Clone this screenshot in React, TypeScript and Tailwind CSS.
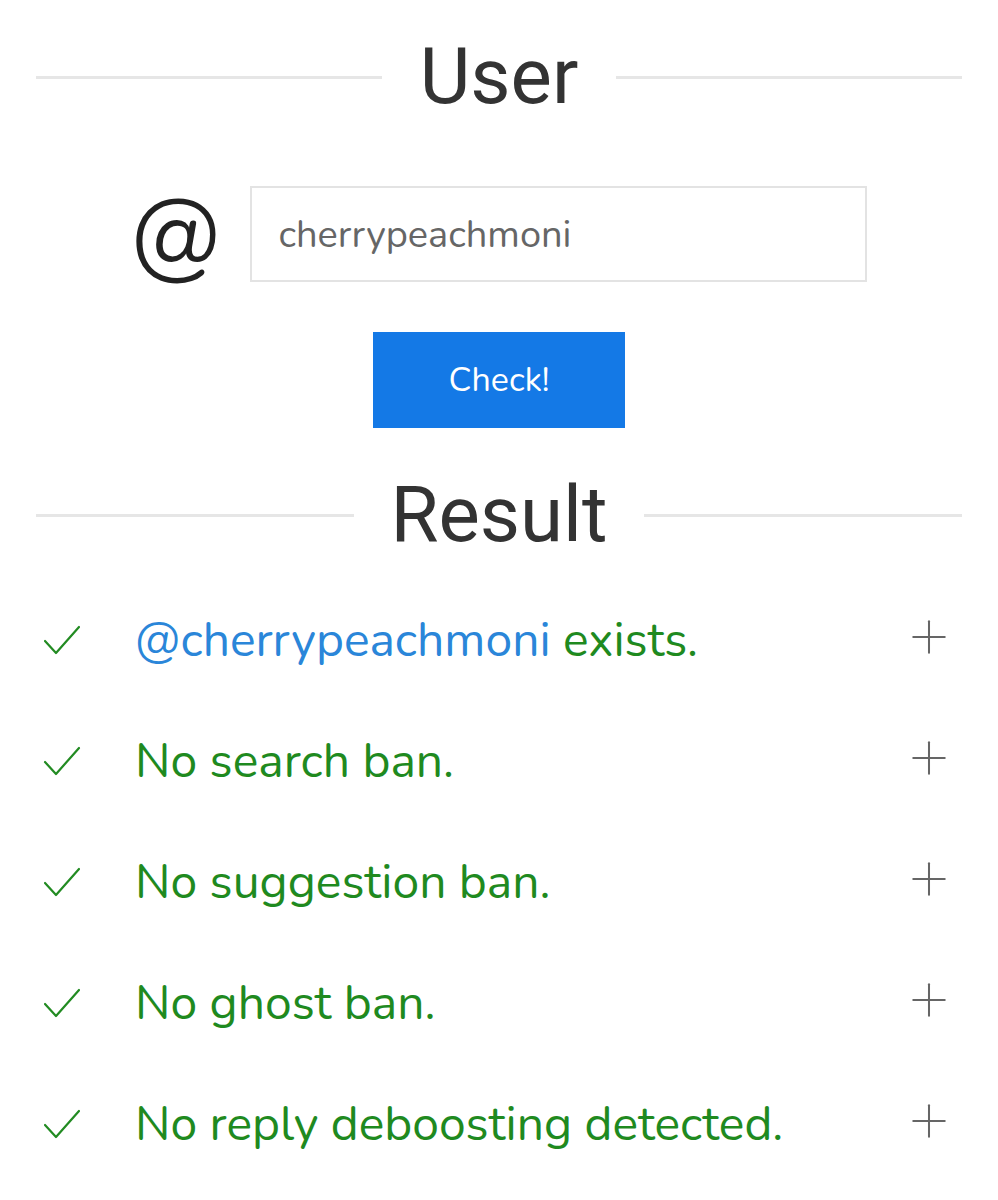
import { Plus } from 'lucide-react';

const rounded = { fontFamily: "Nunito, 'Open Sans', Lato, sans-serif" };
const heading = { fontFamily: "Roboto, 'Liberation Sans', sans-serif" };

const SectionTitle = ({ title, gap }: { title: string; gap: string }) => (
  <div className={`flex items-center ${gap}`}>
    <div className="h-[3px] flex-1 bg-[#e6e6e6]" />
    <h2 className="text-[78px] leading-none text-[#333]" style={heading}>
      {title}
    </h2>
    <div className="h-[3px] flex-1 bg-[#e6e6e6]" />
  </div>
);

const CheckMark = () => (
  <svg width="38" height="30" viewBox="0 0 38 30" fill="none" className="shrink-0">
    <polyline points="2,16 13,28 36,2" stroke="#228b22" strokeWidth="2.2" strokeLinecap="round" strokeLinejoin="round" />
  </svg>
);

const results = [
  { handle: '@cherrypeachmoni', text: ' exists.' },
  { text: 'No search ban.' },
  { text: 'No suggestion ban.' },
  { text: 'No ghost ban.' },
  { text: 'No reply deboosting detected.' },
];

export default function App() {
  return (
    <div className="min-h-[1200px] w-full bg-white px-[36px] pt-[38px]">
      <SectionTitle title="User" gap="gap-[38px]" />

      <div className="mt-[68px] flex items-center justify-center gap-[29px]">
        <span className="text-[96px] leading-none text-[#222] mt-[4px]" style={rounded}>
          @
        </span>
        <div className="flex h-[96px] w-[617px] items-center border-2 border-[#e3e3e3] px-[26px]">
          <span className="text-[38px] text-[#666]" style={rounded}>
            cherrypeachmoni
          </span>
        </div>
      </div>

      <div className="mt-[48px] flex justify-center">
        <button
          className="flex h-[96px] w-[252px] items-center justify-center bg-[#1479e6] text-[34px] text-white"
          style={rounded}
        >
          Check!
        </button>
      </div>

      <div className="mt-[48px]">
        <SectionTitle title="Result" gap="gap-[36px]" />
      </div>

      <ul className="mt-[25px] flex flex-col">
        {results.map((r, i) => (
          <li key={i} className="flex h-[121px] items-center pl-[7px] pr-[6px]" style={rounded}>
            <CheckMark />
            <span className="ml-[54px] flex-1 text-[48px] text-[#1f8a1f]">
              {r.handle && <span className="text-[#2a86d9]">{r.handle}</span>}
              {r.text}
            </span>
            <Plus className="h-[54px] w-[54px] -mt-[6px] text-[#666]" strokeWidth={0.9} />
          </li>
        ))}
      </ul>
    </div>
  );
}
